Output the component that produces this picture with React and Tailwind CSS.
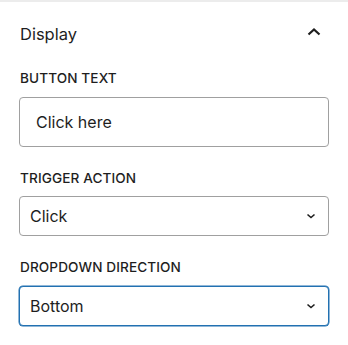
import React from "react";

function Label({ children }) {
  return (
    <div className="text-[13.6px] font-medium leading-none tracking-[0.1px] text-[#1e1e1e]">{children}</div>
  );
}

function Select({ value, focused }) {
  return (
    <div
      className={
        "flex h-[40px] items-center justify-between rounded-[4px] bg-white pl-[10px] pr-[11px] " +
        (focused ? "border-[1.5px] border-[#2271b1] ring-[0.5px] ring-[#2271b1]" : "border border-[#a0a0a0]")
      }
    >
      <span className="text-[16px] text-[#1e1e1e]">{value}</span>
      <svg width="12" height="12" viewBox="0 0 12 12" fill="none" stroke="#1e1e1e" strokeWidth="1.6">
        <path d="M2.5 4.5L6 7.5l3.5-3" />
      </svg>
    </div>
  );
}

export default function App() {
  return (
    <div className="h-[345px] w-[348px] bg-white" style={{ fontFamily: "Inter, 'Noto Sans', sans-serif" }}>
      <div className="h-[2px] bg-[#ececec]" />
      <div className="flex items-center justify-between pl-[20px] pr-[27px] pt-[22px]">
        <span className="text-[16.5px] leading-[20px] text-[#1e1e1e]">Display</span>
        <svg width="14" height="10" viewBox="0 0 14 10" fill="none" stroke="#1e1e1e" strokeWidth="2.2" className="mb-[4px]">
          <path d="M1.5 7.5L7 2.5l5.5 5" />
        </svg>
      </div>
      <div className="px-[19px]">
        <div className="pl-[1px] pt-[28px]">
          <Label>BUTTON TEXT</Label>
        </div>
        <div className="mt-[11px] flex h-[50px] items-center rounded-[4px] border border-[#a0a0a0] bg-white pl-[16px]">
          <span className="text-[16px] text-[#1e1e1e]">Click here</span>
        </div>
        <div className="pl-[1px] pt-[25px]">
          <Label>TRIGGER ACTION</Label>
        </div>
        <div className="mt-[11px]">
          <Select value="Click" />
        </div>
        <div className="pl-[1px] pt-[25px]">
          <Label>DROPDOWN DIRECTION</Label>
        </div>
        <div className="mt-[11px]">
          <Select value="Bottom" focused />
        </div>
      </div>
    </div>
  );
}
